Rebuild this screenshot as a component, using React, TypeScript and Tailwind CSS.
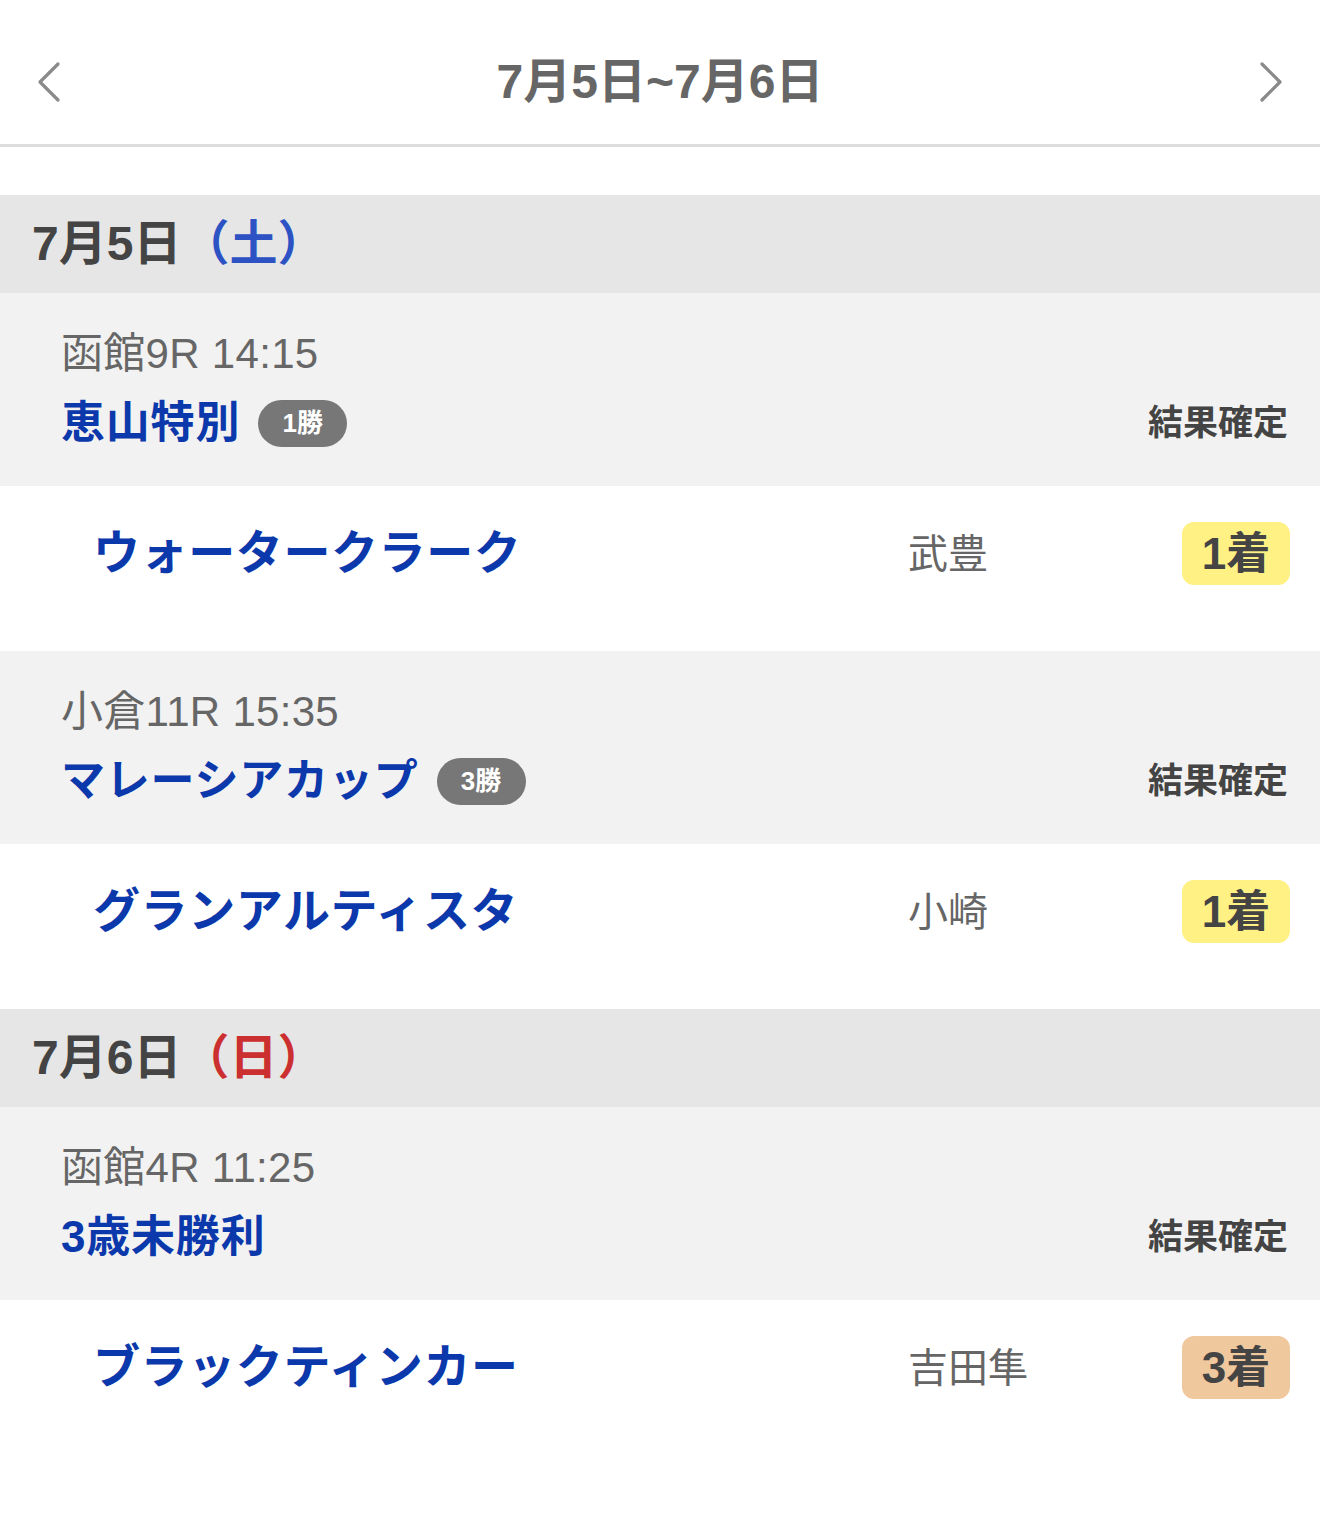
import React from "react";

type Horse = { name: string; jockey: string; rank: number };
type Race = { place: string; name: string; grade?: string; horse: Horse };
type Day = { date: string; weekday: string; color: string; races: Race[] };

const days: Day[] = [
    {
        date: "7月5日",
        weekday: "（土）",
        color: "text-[#2c52c4]",
        races: [
            {
                place: "函館9R 14:15",
                name: "恵山特別",
                grade: "1勝",
                horse: { name: "ウォータークラーク", jockey: "武豊", rank: 1 },
            },
            {
                place: "小倉11R 15:35",
                name: "マレーシアカップ",
                grade: "3勝",
                horse: { name: "グランアルティスタ", jockey: "小崎", rank: 1 },
            },
        ],
    },
    {
        date: "7月6日",
        weekday: "（日）",
        color: "text-[#cc2f2f]",
        races: [
            {
                place: "函館4R 11:25",
                name: "3歳未勝利",
                horse: { name: "ブラックティンカー", jockey: "吉田隼", rank: 3 },
            },
        ],
    },
];

function Chevron({ dir }: { dir: "left" | "right" }) {
    return (
        <svg width="30" height="42" viewBox="0 0 30 42" fill="none">
            <polyline
                points={dir === "left" ? "24,3 6,21 24,39" : "6,3 24,21 6,39"}
                stroke="#8a8a8a"
                strokeWidth="3.2"
                strokeLinecap="round"
                strokeLinejoin="round"
            />
        </svg>
    );
}

function RaceBlock({ race }: { race: Race }) {
    const rankBg = race.horse.rank === 1 ? "bg-[#fff184]" : "bg-[#f0c89e]";
    return (
        <div>
            <div className="bg-[#f2f2f2] pl-[61px] pr-[32px] pt-[36px] pb-[35px]">
                <div className="text-[42px] leading-[50px] text-[#666] tracking-[0.3px]">{race.place}</div>
                <div className="mt-[16px] h-[56px] flex items-center justify-between">
                    <div className="flex items-center gap-[18px]">
                        <span className="text-[44px] font-bold text-[#0b38ab] tracking-[0.8px]">{race.name}</span>
                        {race.grade && (
                            <span className="h-[47px] w-[89px] rounded-full bg-[#777] text-white text-[26px] font-bold flex items-center justify-center">
                                {race.grade}
                            </span>
                        )}
                    </div>
                    <span className="text-[35px] font-bold text-[#444]">結果確定</span>
                </div>
            </div>
            <div className="bg-white pl-[93px] pr-[30px] pt-[36px] pb-[66px]">
                <div className="h-[63px] flex items-center">
                    <span className="flex-1 text-[47px] font-bold text-[#0b38ab] tracking-[0.6px]">{race.horse.name}</span>
                    <span className="w-[274px] text-[40px] text-[#666]">{race.horse.jockey}</span>
                    <span className={`h-[63px] w-[108px] rounded-[12px] ${rankBg} text-[44px] font-bold text-[#444] flex items-center justify-center`}>
                        {race.horse.rank}着
                    </span>
                </div>
            </div>
        </div>
    );
}

export default function App() {
    return (
        <div className="w-[1320px] min-h-[1539px] bg-white font-['Liberation_Sans','Noto_Sans_CJK_JP',sans-serif]">
            <header className="h-[147px] border-b-[3px] border-[#dddddd] flex items-center justify-between px-[34px] pt-[20px]">
                <Chevron dir="left" />
                <h1 className="text-[48px] font-bold text-[#666]">7月5日~7月6日</h1>
                <Chevron dir="right" />
            </header>
            <div className="h-[48px]" />
            {days.map((day) => (
                <section key={day.date}>
                    <div className="h-[98px] bg-[#e6e6e6] flex items-center pl-[32px]">
                        <span className="text-[48px] font-bold text-[#444]">{day.date}</span>
                        <span className={`text-[48px] font-bold ${day.color}`}>{day.weekday}</span>
                    </div>
                    {day.races.map((race) => (
                        <RaceBlock key={race.place} race={race} />
                    ))}
                </section>
            ))}
        </div>
    );
}
